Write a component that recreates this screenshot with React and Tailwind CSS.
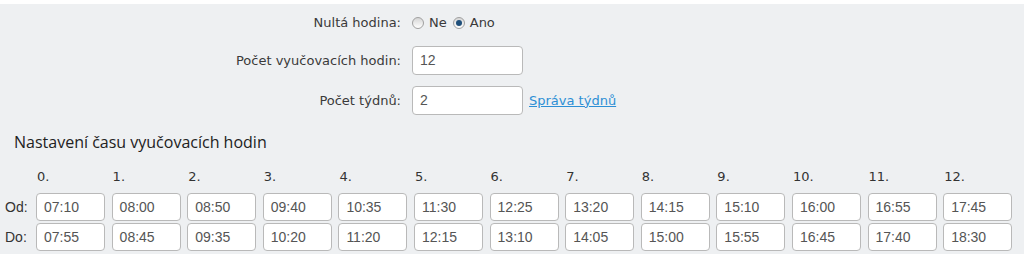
import { useState } from "react";

const od = ["07:10", "08:00", "08:50", "09:40", "10:35", "11:30", "12:25", "13:20", "14:15", "15:10", "16:00", "16:55", "17:45"];
const doo = ["07:55", "08:45", "09:35", "10:20", "11:20", "12:15", "13:10", "14:05", "15:00", "15:55", "16:45", "17:40", "18:30"];

const labelFont = { fontFamily: "Tahoma, 'DejaVu Sans', sans-serif" };

function Radio({ checked }) {
  return (
    <span className="inline-flex h-[12px] w-[12px] items-center justify-center rounded-full border border-[#a0a0a0] bg-gradient-to-b from-[#d6d6d6] to-white">
      {checked && <span className="h-[6px] w-[6px] rounded-full bg-[#1f4f7a]" />}
    </span>
  );
}

function TimeInput({ value }) {
  return (
    <div className="flex h-[28px] w-[69px] items-center rounded-[4px] border border-[#b9b9b9] bg-white pl-[7px] text-[14px] text-[#555] font-['Liberation_Sans',Arial,sans-serif]">
      {value}
    </div>
  );
}

export default function App() {
  const [zero] = useState(true);

  return (
    <div className="h-[257px] w-[1024px] overflow-hidden bg-white pt-[4px]">
      <div className="h-[250px] bg-[#eef0f2] text-[#3a3a3a]" style={labelFont}>
        {/* top form */}
        <div className="grid grid-cols-[401px_1fr] items-center gap-x-[11px] pt-[7px] text-[13px]">
          <div className="h-[24px] leading-[24px] text-right">Nultá hodina:</div>
          <div className="flex h-[24px] items-center">
            <Radio checked={!zero} />
            <span className="ml-[5px] mr-[6px]">Ne</span>
            <Radio checked={zero} />
            <span className="ml-[5px]">Ano</span>
          </div>

          <div className="mt-[11px] text-right">Počet vyučovacích hodin:</div>
          <div className="mt-[11px] flex">
            <div className="flex h-[29px] w-[111px] items-center rounded-[4px] border border-[#b9b9b9] bg-white pl-[7px] text-[14px] text-[#555] font-['Liberation_Sans',Arial,sans-serif]">12</div>
          </div>

          <div className="mt-[11px] text-right">Počet týdnů:</div>
          <div className="mt-[11px] flex items-center">
            <div className="flex h-[29px] w-[111px] items-center rounded-[4px] border border-[#b9b9b9] bg-white pl-[7px] text-[14px] text-[#555] font-['Liberation_Sans',Arial,sans-serif]">2</div>
            <a href="#" className="ml-[6px] text-[13px] text-[#2d8fd5] underline">Správa týdnů</a>
          </div>
        </div>

        <h2 className="ml-[14px] mt-[16px] text-[16px] leading-[22px] text-[#222] font-['Open_Sans',sans-serif]">
          Nastavení času vyučovacích hodin
        </h2>

        {/* times */}
        <div className="mt-[15px] flex pl-[5px]">
          <div className="mt-[25px] flex w-[31px] flex-col gap-[2px] text-[14px] text-[#333] font-['Liberation_Sans',Arial,sans-serif]">
            <div className="h-[28px] leading-[28px]">Od:</div>
            <div className="h-[28px] leading-[28px]">Do:</div>
          </div>
          <div className="flex gap-[6.6px]">
            {od.map((t, i) => (
              <div key={i} className="flex flex-col">
                <div className="h-[17px] pl-[1px] text-[13px] leading-[17px] text-[#333]">{i}.</div>
                <div className="mt-[8px] flex flex-col gap-[2px]">
                  <TimeInput value={t} />
                  <TimeInput value={doo[i]} />
                </div>
              </div>
            ))}
          </div>
        </div>
      </div>
    </div>
  );
}
